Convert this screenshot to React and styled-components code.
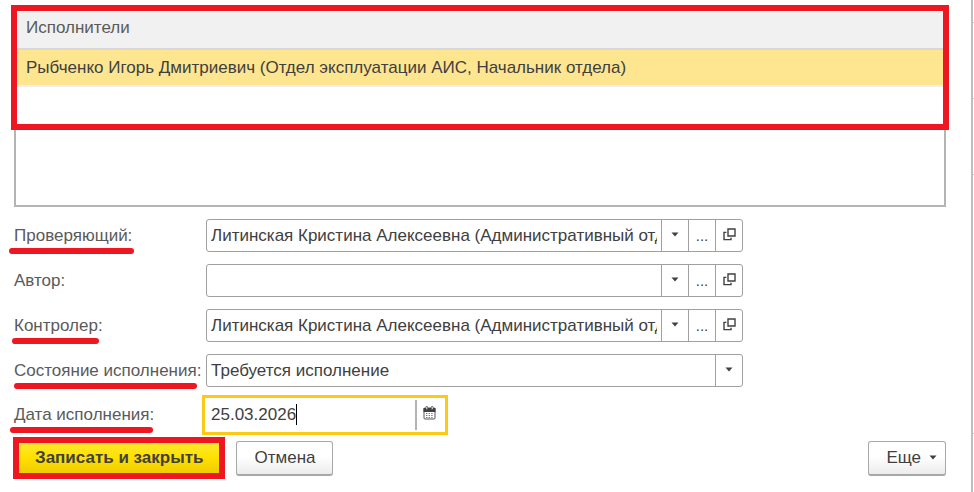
import React, { useState } from "react";
import styled, { createGlobalStyle } from "styled-components";

const GlobalStyle = createGlobalStyle`
    * {
        box-sizing: border-box;
    }
    body {
        margin: 0;
        background-color: #ffffff;
        color: #404040;
        font-family: "Liberation Sans", Arial, sans-serif;
        font-size: 17px;
        line-height: 20px;
    }
    input, select, button {
        font: inherit;
        color: inherit;
    }
`;

const Page = styled.div`
    display: flex;
    min-height: 100vh;
`;

const Form = styled.form`
    flex: 1;
    min-width: 0;
    padding: 8px 25px 12px 14px;
`;

const ListBox = styled.div`
    position: relative;
    height: 199px;
    margin-bottom: 12px;
    border: 2px solid #b4b4b4;
    padding: 2px 1px;
`;

const ListFrame = styled.div`
    position: absolute;
    top: -5px;
    left: -5px;
    right: -5px;
    height: 125px;
    border: 6px solid #ee1620;
    pointer-events: none;
`;

const Table = styled.table`
    width: 100%;
    border-collapse: collapse;
`;

const HeadCell = styled.th`
    height: 37px;
    padding: 0 9px 4px;
    background-color: #f1f1f1;
    border-bottom: 2px solid #d8d8dc;
    color: #5a5a5a;
    font-weight: normal;
    text-align: left;
`;

const Cell = styled.td`
    height: 37px;
    padding: 0 9px;
    background-color: #fee590;
    border-bottom: 2px solid #efefef;
`;

const Rows = styled.div`
    display: grid;
    grid-template-columns: 192px minmax(0, 537px);
    row-gap: 12px;
    align-items: center;
`;

const Label = styled.label`
    color: #5a5a5a;
    white-space: nowrap;
`;

const Marked = styled.span`
    position: relative;
    &::after {
        content: "";
        position: absolute;
        left: ${props => props.$left}px;
        right: ${props => props.$right}px;
        bottom: -9px;
        height: 6px;
        border-radius: 3px;
        background-color: #ee1620;
    }
`;

const Field = styled.div`
    display: flex;
    height: 33px;
    border: 1px solid #a0a0a0;
    border-radius: 3px;
    background-color: #ffffff;
    overflow: hidden;
`;

const TextInput = styled.input`
    flex: 1;
    min-width: 0;
    margin: 0 4px;
    padding: 0;
    border: none;
    outline: none;
    background: transparent;
`;

const SelectInput = styled.select`
    flex: 1;
    min-width: 0;
    padding: 0 4px;
    border: none;
    outline: none;
    appearance: none;
    background: transparent;
`;

const FieldButton = styled.button`
    display: flex;
    align-items: center;
    justify-content: center;
    width: 27px;
    padding: 0 0 2px;
    border: none;
    border-left: 1px solid #a0a0a0;
    background: transparent;
    cursor: pointer;
`;

const SelectMark = styled(FieldButton).attrs({ as: "span" })`
    pointer-events: none;
`;

const Dots = styled.span`
    padding-top: 2px;
    font-size: 15px;
`;

const DateField = styled.div`
    position: relative;
    display: flex;
    align-items: center;
    width: 246px;
    height: 40px;
    margin: -4px;
    border: 3px solid #fcc917;
    background-color: #ffffff;
`;

const DateInput = styled(TextInput)`
    margin: 0 6px;
    caret-color: transparent;
`;

const Caret = styled.span`
    position: absolute;
    top: 6px;
    left: calc(6px + 9ch);
    width: 1px;
    height: 21px;
    background-color: #000000;
`;

const DateButton = styled(FieldButton)`
    width: 30px;
    height: 30px;
    padding: 0 4px 4px 0;
    border-left: 2px solid #b4b4b4;
`;

const Footer = styled.div`
    display: flex;
    align-items: center;
    gap: 11px;
    margin-top: 6px;
`;

const Button = styled.button`
    height: 35px;
    padding: 0 17px;
    border: 1px solid #a8a8a8;
    border-bottom-width: 2px;
    border-radius: 3px;
    background: linear-gradient(#ffffff 45%, #ececec);
    cursor: pointer;
`;

const SubmitButton = styled(Button)`
    height: 42px;
    margin-left: -1px;
    padding: 0 16px;
    border: 6px solid #ee1620;
    border-radius: 0;
    background: linear-gradient(#ffe92e, #ffe000 50%, #efcc00);
    font-weight: bold;
`;

const MoreButton = styled(Button)`
    display: flex;
    align-items: center;
    gap: 8px;
    margin-left: auto;
    padding: 0 8px 0 17px;
`;

const Edge = styled.div`
    width: 3px;
    border-left: 2px solid #bebebe;
`;

const EdgeRow = styled.div`
    height: ${props => props.$height}px;
    border-bottom: 1px solid #c8c8c8;
`;

const ArrowIcon = () => (
    <svg width="8" height="5" viewBox="0 0 8 5" aria-hidden="true">
        <path d="M0.5 0.5h7L4 4.5z" fill="#404040" />
    </svg>
);

const OpenIcon = () => (
    <svg width="13" height="13" viewBox="0 0 13 13" fill="none" stroke="#404040" strokeWidth="1.4" aria-hidden="true">
        <path d="M5 1h7v7H5z" />
        <path d="M3.4 4.4H1v7.2h7V9.8" />
    </svg>
);

const CalendarIcon = () => (
    <svg width="13" height="14" viewBox="0 0 13 14" aria-hidden="true">
        <rect x="1" y="2" width="11" height="11" rx="1" fill="#ffffff" stroke="#555555" />
        <path d="M0.5 2h12v4h-12z" fill="#404040" />
        <path d="M3 0.5h1.6v3H3zM8.4 0.5H10v3H8.4z" fill="#ffffff" stroke="#404040" strokeWidth="0.6" />
        <path d="M3 7.5h7M3 9.5h7M3 11.5h7" stroke="#777777" strokeWidth="1.1" strokeDasharray="1.4 1.2" />
    </svg>
);

const PersonField = ({ id, value, onChange }) => (
    <Field>
        <TextInput id={id} value={value} onChange={e => onChange(e.target.value)} />
        <FieldButton type="button" aria-label="Выбрать из списка"><ArrowIcon /></FieldButton>
        <FieldButton type="button" aria-label="Показать все"><Dots>...</Dots></FieldButton>
        <FieldButton type="button" aria-label="Открыть"><OpenIcon /></FieldButton>
    </Field>
);

const person = "Литинская Кристина Алексеевна (Административный отдел)";

const App = () => {
    const [reviewer, setReviewer] = useState(person);
    const [author, setAuthor] = useState("");
    const [controller, setController] = useState(person);
    const [date, setDate] = useState("25.03.2026");

    return (
        <>
            <GlobalStyle />
            <Page>
                <Form onSubmit={e => e.preventDefault()}>
                    <ListBox>
                        <Table>
                            <thead>
                                <tr><HeadCell>Исполнители</HeadCell></tr>
                            </thead>
                            <tbody>
                                <tr><Cell>Рыбченко Игорь Дмитриевич (Отдел эксплуатации АИС, Начальник отдела)</Cell></tr>
                            </tbody>
                        </Table>
                        <ListFrame />
                    </ListBox>
                    <Rows>
                        <Label htmlFor="reviewer"><Marked $left={-5} $right={-2}>Проверяющий:</Marked></Label>
                        <PersonField id="reviewer" value={reviewer} onChange={setReviewer} />
                        <Label htmlFor="author">Автор:</Label>
                        <PersonField id="author" value={author} onChange={setAuthor} />
                        <Label htmlFor="controller"><Marked $left={-2} $right={4}>Контролер:</Marked></Label>
                        <PersonField id="controller" value={controller} onChange={setController} />
                        <Label htmlFor="state"><Marked $left={0} $right={4}>Состояние исполнения:</Marked></Label>
                        <Field>
                            <SelectInput id="state">
                                <option>Требуется исполнение</option>
                            </SelectInput>
                            <SelectMark><ArrowIcon /></SelectMark>
                        </Field>
                        <Label htmlFor="date"><Marked $left={-4} $right={1}>Дата исполнения:</Marked></Label>
                        <DateField>
                            <DateInput id="date" value={date} onChange={e => setDate(e.target.value)} />
                            <Caret />
                            <DateButton type="button" aria-label="Календарь"><CalendarIcon /></DateButton>
                        </DateField>
                    </Rows>
                    <Footer>
                        <SubmitButton type="submit">Записать и закрыть</SubmitButton>
                        <Button type="button">Отмена</Button>
                        <MoreButton type="button">Еще <ArrowIcon /></MoreButton>
                    </Footer>
                </Form>
                <Edge>
                    <EdgeRow $height={23} />
                    <EdgeRow $height={76} />
                    <EdgeRow $height={76} />
                    <EdgeRow $height={259} />
                </Edge>
            </Page>
        </>
    );
};

export default App;
